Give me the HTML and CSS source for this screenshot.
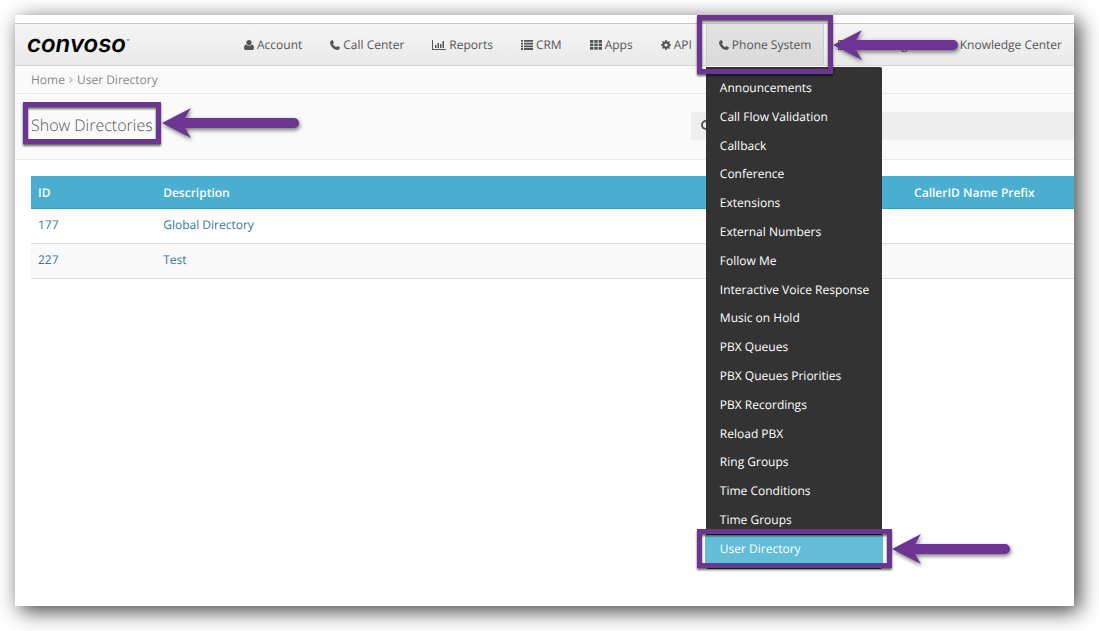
FILE: index.html
```html
<!DOCTYPE html>
<html lang="en">
<head>
  <meta charset="UTF-8">
  <title>User Directory | Convoso</title>
  <meta name="viewport" content="width=device-width, initial-scale=1.0">
  <link rel="stylesheet" href="styles.css">
</head>
<body>

  <div class="window">
    <header class="navbar">
      <a class="logo" href="#">convoso<sup>™</sup></a>
      <nav class="nav">
        <a class="nav-item" href="#">
          <svg class="icon" width="10" height="10" viewBox="0 0 10 10"><circle cx="5" cy="2.6" r="2.6"/><path d="M2 4.6C.5 5 0 6.500 0 8.300 0 9.400.7 10 1.600 10h6.800C9.300 10 10 9.400 10 8.300 10 6.500 9.500 5 8 4.600 6.500 6.200 3.500 6.200 2 4.600z"/></svg>
          Account
        </a>
        <a class="nav-item" href="#">
          <svg class="icon" width="10" height="10" viewBox="0 0 10 10"><path d="M1.900.2C2.300 0 2.600 0 2.800.4l1 1.900c.2.400 0 .6-.3.900l-.7.7C3.500 5.300 4.600 6.400 6.100 7.200l.8-.8c.2-.3.5-.4.900-.2l1.900 1c.3.200.3.400.2.800C9.500 9.300 8.500 10 7.300 10 3.700 9.600.4 6.300 0 2.700 0 1.500.7.600 1.900.2z"/></svg>
          Call Center
        </a>
        <a class="nav-item" href="#">
          <svg class="icon" width="14" height="10" viewBox="0 0 14 10"><path d="M0 0h1v9h13v1H0zM3 5h1.500v3H3zM5.500 3H7v5H5.500zM8 4h1.500v4H8zM10.500 1H12v7h-1.500z"/></svg>
          Reports
        </a>
        <a class="nav-item" href="#">
          <svg class="icon" width="12" height="10" viewBox="0 0 12 10"><path d="M0 0h2v1.800H0zM3 0h9v1.800H3zM0 2.700h2v1.800H0zM3 2.700h9v1.800H3zM0 5.400h2v1.800H0zM3 5.400h9v1.800H3zM0 8.100h2v1.800H0zM3 8.100h9v1.800H3z"/></svg>
          CRM
        </a>
        <a class="nav-item" href="#">
          <svg class="icon" width="12" height="10" viewBox="0 0 12 10"><path d="M0 0h3.400v2.700H0zM4.300 0h3.400v2.700H4.300zM8.600 0H12v2.700H8.600zM0 3.500h3.400v2.700H0zM4.300 3.500h3.400v2.700H4.300zM8.600 3.500H12v2.700H8.600zM0 7h3.400v2.700H0zM4.300 7h3.400v2.700H4.300zM8.600 7H12v2.700H8.600z"/></svg>
          Apps
        </a>
        <a class="nav-item" href="#">
          <svg class="icon" width="10" height="10" viewBox="0 0 10 10"><circle cx="5" cy="5" r="2.700" fill="none" stroke="currentColor" stroke-width="2.200"/><path d="M4.200 0h1.600v2H4.200zM4.200 8h1.600v2H4.200zM0 4.200h2v1.600H0zM8 4.200h2v1.600H8zM.9 2L2 .9l1.500 1.500-1.100 1.100zM8 .9L9.100 2 7.600 3.500 6.500 2.400zM.9 8L2 9.100l1.500-1.500-1.100-1.100zM8 9.100L9.100 8 7.600 6.500 6.500 7.600z"/></svg>
          API
        </a>
        <div class="dropdown callout">
          <a class="nav-item open" href="#">
            <svg class="icon" width="10" height="10" viewBox="0 0 10 10"><path d="M1.900.2C2.300 0 2.600 0 2.800.4l1 1.900c.2.400 0 .6-.3.900l-.7.7C3.500 5.300 4.600 6.400 6.100 7.200l.8-.8c.2-.3.5-.4.900-.2l1.900 1c.3.200.3.400.2.800C9.500 9.300 8.500 10 7.300 10 3.700 9.600.4 6.300 0 2.700 0 1.500.7.600 1.900.2z"/></svg>
            Phone System
          </a>
          <svg class="arrow" width="126" height="32" viewBox="0 0 126 32"><path d="M0 16L29 1l-6 10h97a5 5 0 0 1 0 10H23l6 10z"/></svg>
          <ul class="menu">
            <li><a href="#">Announcements</a></li>
            <li><a href="#">Call Flow Validation</a></li>
            <li><a href="#">Callback</a></li>
            <li><a href="#">Conference</a></li>
            <li><a href="#">Extensions</a></li>
            <li><a href="#">External Numbers</a></li>
            <li><a href="#">Follow Me</a></li>
            <li><a href="#">Interactive Voice Response</a></li>
            <li><a href="#">Music on Hold</a></li>
            <li><a href="#">PBX Queues</a></li>
            <li><a href="#">PBX Queues Priorities</a></li>
            <li><a href="#">PBX Recordings</a></li>
            <li><a href="#">Reload PBX</a></li>
            <li><a href="#">Ring Groups</a></li>
            <li><a href="#">Time Conditions</a></li>
            <li><a href="#">Time Groups</a></li>
            <li class="active callout">
              <a href="#">User Directory</a>
              <svg class="arrow" width="120" height="32" viewBox="0 0 120 32"><path d="M0 16L29 1l-6 10h90a5 5 0 0 1 0 10H23l6 10z"/></svg>
            </li>
          </ul>
        </div>
        <a class="nav-item" href="#">
          <svg class="icon" width="10" height="10" viewBox="0 0 10 10"><path d="M.5.5h9v9h-9z" fill="none" stroke="currentColor"/></svg>
          Recordings
        </a>
        <a class="nav-item last" href="#">
          <svg class="icon" width="10" height="10" viewBox="0 0 10 10"><circle cx="5" cy="5" r="5"/></svg>
          Knowledge Center
        </a>
      </nav>
    </header>

    <div class="breadcrumb">
      <a href="#">Home</a>
      <svg width="4" height="6" viewBox="0 0 4 6"><path d="M.5.500L3 3 .5 5.500" fill="none" stroke="#bbb" stroke-width="1.500"/></svg>
      <a href="#">User Directory</a>
    </div>

    <div class="page-header">
      <div class="title callout">
        <h1>Show Directories</h1>
        <svg class="arrow" width="138" height="32" viewBox="0 0 138 32"><path d="M0 16L29 1l-6 10h109a5 5 0 0 1 0 10H23l6 10z"/></svg>
      </div>
      <label class="search">
        <svg width="12" height="12" viewBox="0 0 12 12"><circle cx="5" cy="5" r="4" fill="none" stroke="#555" stroke-width="2"/><path d="M8 8l3 3" stroke="#555" stroke-width="2"/></svg>
        <input type="text" aria-label="Search">
      </label>
    </div>

    <main class="content">
      <table>
        <thead>
          <tr>
            <th class="col-id">ID</th>
            <th class="col-desc">Description</th>
            <th>CallerID Name Prefix</th>
          </tr>
        </thead>
        <tbody>
          <tr>
            <td><a href="#">177</a></td>
            <td><a href="#">Global Directory</a></td>
            <td></td>
          </tr>
          <tr>
            <td><a href="#">227</a></td>
            <td><a href="#">Test</a></td>
            <td></td>
          </tr>
        </tbody>
      </table>
    </main>
  </div>

</body>
</html>
```
FILE: styles.css
```css
* {
  box-sizing: border-box;
}

body {
  margin: 0;
  padding: 15px 25px 25px 15px;
  min-height: 100vh;
  display: flex;
  background: #fff;
  font-family: "Open Sans", "Liberation Sans", sans-serif;
  font-size: 12px;
  line-height: 1.4;
  text-rendering: geometricPrecision;
  color: #555;
}

a {
  color: inherit;
  text-decoration: none;
}

.window {
  flex: 1;
  min-width: 0;
  padding-top: 8px;
  background: #fff;
  box-shadow: 5px 5px 20px rgba(0, 0, 0, 0.75);
}

/* navbar */
.navbar {
  display: flex;
  height: 43px;
  border-top: 1px solid #c4c4c4;
  border-bottom: 1px solid #d6d6d6;
  background: linear-gradient(#f5f5f5, #e9e9e9);
}

.logo {
  width: 215px;
  padding-left: 12px;
  font-family: Inter, sans-serif;
  font-size: 24px;
  font-weight: 600;
  font-style: italic;
  line-height: 40px;
  color: #000;
}

.logo sup {
  font-size: 5px;
  font-weight: 400;
  line-height: 1;
  vertical-align: 9px;
}

.nav {
  flex: 1;
  display: flex;
}

.nav-item {
  display: flex;
  align-items: center;
  gap: 3px;
  height: 41px;
  padding: 1px 14px 0;
  white-space: nowrap;
}

.nav-item.last {
  margin-left: auto;
  padding-right: 12px;
}

.nav-item.open {
  padding: 1px 12px 0;
  border-left: 1px solid #ccc;
  border-right: 1px solid #ccc;
  background: linear-gradient(#e3e3e3, #d9d9d9);
}

.icon {
  flex: none;
  fill: #555;
}

/* dropdown */
.dropdown {
  position: relative;
  z-index: 2;
}

.menu {
  position: absolute;
  top: 43px;
  left: 0;
  width: 176px;
  margin: 0;
  padding: 7px 0 5px;
  list-style: none;
  background: #333;
  border-radius: 0 2px 2px 2px;
  color: #fff;
  font-weight: 500;
  white-space: nowrap;
}

.menu a {
  display: block;
  padding: 6px 14px;
}

.menu .active {
  position: relative;
  margin: 0 -1px;
  padding: 0 1px;
  background: #63bdd9;
}

/* purple highlight boxes and arrows */
.callout::after {
  content: "";
  position: absolute;
  inset: -9px;
  z-index: 3;
  border: 5px solid #6b3591;
  filter: drop-shadow(0 2px 1px rgba(0, 0, 0, 0.6));
  pointer-events: none;
}

.active.callout::after {
  inset: -6px -9px -4px -8px;
}

.arrow {
  position: absolute;
  left: calc(100% + 9px);
  top: 50%;
  z-index: 4;
  margin-top: -16px;
  fill: #6b3591;
  filter: drop-shadow(1px 2px 2px rgba(0, 0, 0, 0.55));
}

/* breadcrumb */
.breadcrumb {
  display: flex;
  align-items: center;
  gap: 4px;
  height: 28px;
  padding: 1px 0 0 16px;
  background: #fafafa;
  border-bottom: 1px solid #e8e8e8;
  color: #888;
}

/* title row */
.page-header {
  display: flex;
  align-items: center;
  justify-content: space-between;
  height: 66px;
  padding-left: 16px;
  background: #fafafa;
  border-bottom: 1px solid #e8e8e8;
}

.title {
  position: relative;
  margin-bottom: 8px;
}

.title.callout::after {
  inset: -9px -8px;
}

.title h1 {
  margin: 0;
  padding-top: 4px;
  font-size: 16px;
  font-weight: 300;
  line-height: 20px;
}

.search {
  display: flex;
  align-items: center;
  gap: 8px;
  width: 383px;
  height: 28px;
  margin-bottom: 2px;
  padding-left: 10px;
  background: #eee;
  border-radius: 2px 0 0 2px;
}

.search input {
  flex: 1;
  border: 0;
  outline: 0;
  background: none;
  font: inherit;
}

/* table */
.content {
  padding: 16px 0 0 16px;
}

table {
  width: 100%;
  table-layout: fixed;
  border-collapse: collapse;
}

th,
td {
  padding: 0 7px;
  text-align: left;
}

th {
  height: 32px;
  padding-top: 3px;
  background: #4aaed0;
  border-bottom: 1px solid #3f9fc0;
  color: #fff;
  font-weight: 600;
}

td {
  height: 35px;
  border-bottom: 1px solid #ddd;
  color: #38759f;
}

tbody tr:nth-child(even) {
  background: #f9f9f9;
}

.col-id {
  width: 12%;
}

.col-desc {
  width: 72%;
}
```
